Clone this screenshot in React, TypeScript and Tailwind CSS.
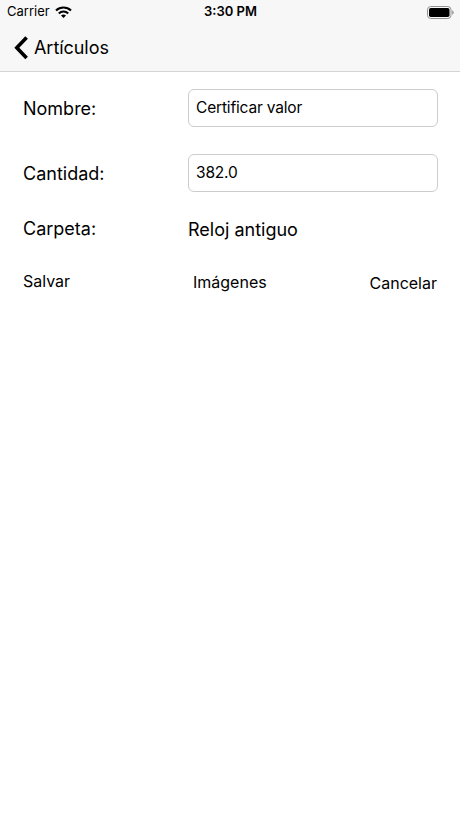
import React from "react";

interface FieldProps {
    value: string;
}

const Field: React.FC<FieldProps> = ({ value }) => (
    <div className="flex h-[38px] w-[250px] items-center rounded-[6px] border border-[#cccccc] bg-white pb-[1px] pl-[7px] text-[15.5px] tracking-[-0.17px]">
        {value}
    </div>
);

const StatusBar: React.FC = () => (
    <div className="grid h-6 grid-cols-3 items-center pl-[7px] pr-[6px] text-[13px]">
        <div className="flex items-center gap-[5px]">
            <span>Carrier</span>
            <svg width="17" height="12" viewBox="0 0 17 12">
                <path d="M8.5 12 11 9.5a3.8 3.8 0 0 0-5 0z" />
                <path d="M3.8 7.4a6.8 6.8 0 0 1 9.4 0M1 4.5a10.8 10.8 0 0 1 15 0" fill="none" stroke="#000" strokeWidth="2.1" />
            </svg>
        </div>
        <span className="text-center font-semibold">3:30 PM</span>
        <svg className="justify-self-end" width="27" height="13" viewBox="0 0 27 13">
            <rect x=".5" y=".5" width="23.5" height="12" rx="3.2" fill="none" stroke="#929292" />
            <rect x="2" y="2" width="20.5" height="9" rx="1.8" />
            <path d="M25.2 4.3c2 .8 2 3.6 0 4.4z" fill="#929292" />
        </svg>
    </div>
);

const App: React.FC = () => {
    return (
        <div className="min-h-screen bg-white font-['Inter',sans-serif] text-black">
            <header className="h-[72px] border-b border-[#d4d4d4] bg-[#f7f7f7]">
                <StatusBar />
                <div className="flex h-[47px] items-center gap-[5px] pl-[14px]">
                    <svg width="15" height="24" viewBox="0 0 15 24" fill="none" stroke="#000" strokeWidth="3.6">
                        <path d="M12.6 1.5 2.8 11.8l9.8 10.3" />
                    </svg>
                    <span className="text-[18px] tracking-[-0.05px]">Artículos</span>
                </div>
            </header>
            <main className="pl-[23px] pr-[22px] pt-[17px] text-[18px]">
                <div className="flex h-[38px] items-center justify-between">
                    <span>Nombre:</span>
                    <Field value="Certificar valor" />
                </div>
                <div className="mt-[27px] flex h-[38px] items-center justify-between">
                    <span>Cantidad:</span>
                    <Field value="382.0" />
                </div>
                <div className="mt-[21px] flex h-[30px] items-center">
                    <span className="w-[165px]">Carpeta:</span>
                    <span className="pt-[2px]">Reloj antiguo</span>
                </div>
                <div className="mt-[26px] flex h-6 text-[16px] leading-6">
                    <button className="w-[170px] text-left">Salvar</button>
                    <button className="pt-[1px]">Imágenes</button>
                    <button className="ml-auto mr-[1px] pt-[2px]">Cancelar</button>
                </div>
            </main>
        </div>
    );
};

export default App;
